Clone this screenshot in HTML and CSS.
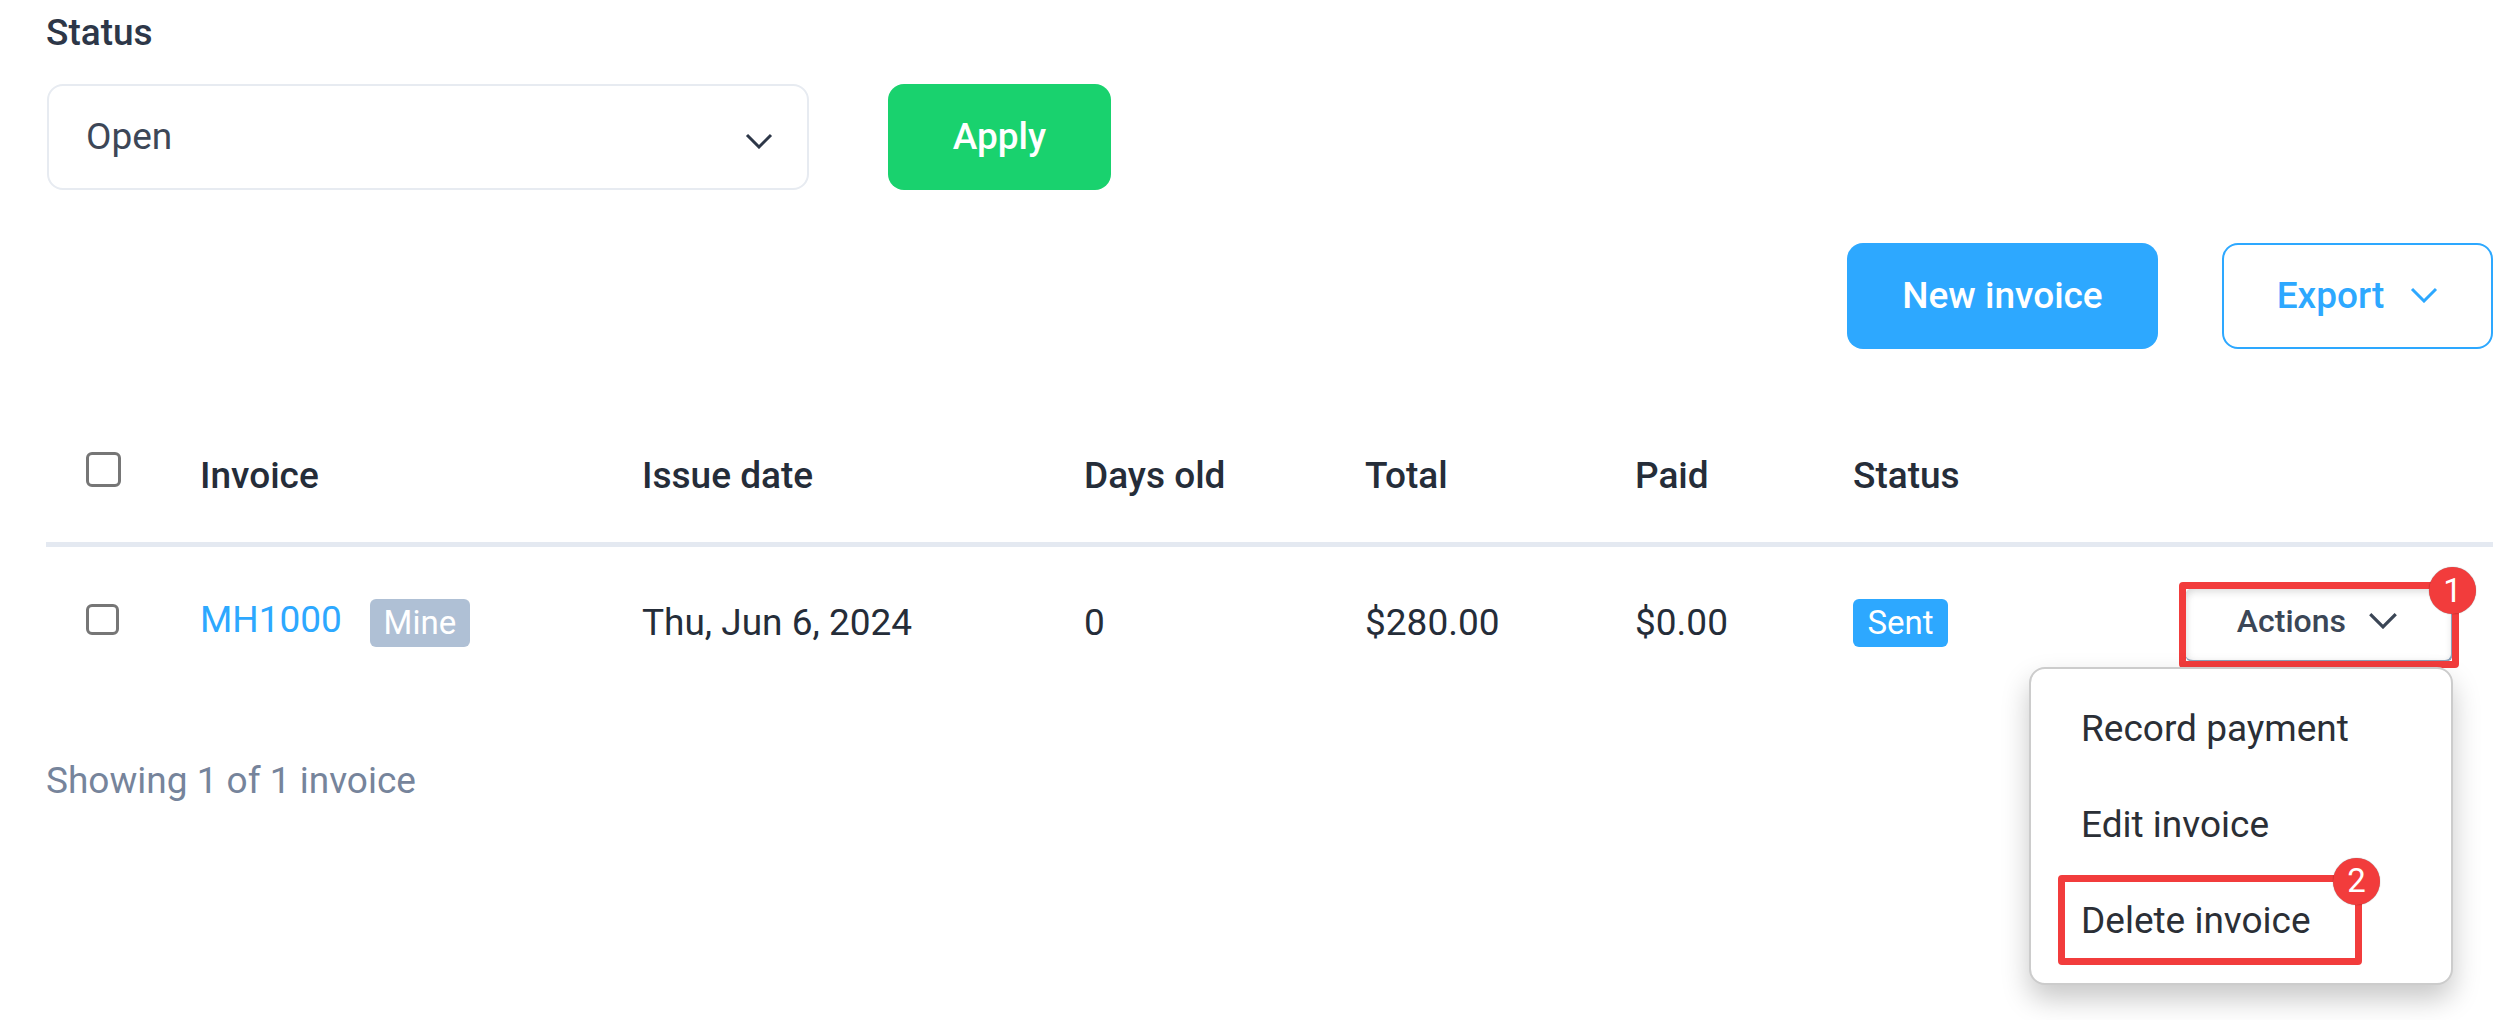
FILE: index.html
```html
<!DOCTYPE html>
<html lang="en">
<head>
<meta charset="utf-8">
<title>Invoices</title>
<link rel="stylesheet" href="styles.css">
</head>
<body>
<main class="page">
  <form class="filter">
    <label class="filter-label">Status</label>
    <div class="filter-row">
      <div class="select">
        <span>Open</span>
        <svg class="select-chevron" viewBox="0 0 28 16"><path d="M2 2 L14 14 L26 2"/></svg>
      </div>
      <button type="button" class="btn btn-apply">Apply</button>
    </div>
  </form>
  <div class="toolbar">
    <button type="button" class="btn btn-new">New invoice</button>
    <button type="button" class="btn btn-export">Export
      <svg class="export-chevron" viewBox="0 0 28 16"><path d="M2 2 L14 14 L26 2"/></svg>
    </button>
  </div>
  <table class="invoices">
    <colgroup>
      <col class="c-check"><col class="c-invoice"><col class="c-date"><col class="c-days"><col class="c-total"><col class="c-paid"><col class="c-status"><col>
    </colgroup>
    <thead>
      <tr>
        <th class="check-cell"><span class="checkbox checkbox-head"></span></th>
        <th>Invoice</th>
        <th>Issue date</th>
        <th>Days old</th>
        <th>Total</th>
        <th>Paid</th>
        <th>Status</th>
        <th></th>
      </tr>
    </thead>
    <tbody>
      <tr>
        <td class="check-cell"><span class="checkbox"></span></td>
        <td><a class="invoice-link">MH1000</a><span class="tag tag-mine">Mine</span></td>
        <td>Thu, Jun 6, 2024</td>
        <td>0</td>
        <td>$280.00</td>
        <td>$0.00</td>
        <td><span class="tag tag-sent">Sent</span></td>
        <td class="actions-cell">
          <div class="actions">
            <div class="actions-btn">Actions
              <svg class="actions-chevron" viewBox="0 0 28 16"><path d="M2 2 L14 14 L26 2"/></svg>
            </div>
            <div class="mark mark-actions"><span class="mark-num">1</span></div>
            <ul class="menu">
              <li>Record payment</li>
              <li>Edit invoice</li>
              <li>Delete invoice<div class="mark mark-delete"><span class="mark-num">2</span></div></li>
            </ul>
          </div>
        </td>
      </tr>
    </tbody>
  </table>
  <p class="count">Showing 1 of 1 invoice</p>
</main>
</body>
</html>
```
FILE: styles.css
```css
* { box-sizing: border-box; }
html, body { margin: 0; padding: 0; background: #fff; }
body {
  height: 1020px;
  overflow: hidden;
  font-family: Roboto, "Liberation Sans", sans-serif;
  font-size: 37px;
  color: #2d3748;
}
.page { padding: 13px 23px 0 46px; }
.filter-label { display: block; font-size: 37px; font-weight: 500; line-height: 40px; height: 71px; }
.filter-row { display: flex; gap: 79px; align-items: flex-start; padding-left: 1px; }
.select {
  width: 762px; height: 106px;
  border: 2px solid #e7ebf1; border-radius: 16px;
  display: flex; align-items: center; justify-content: space-between;
  padding: 0 34px 2px 37px;
  color: #3d4757;
}
.select-chevron { width: 28px; height: 16px; margin-top: 10px; }
.select-chevron path, .export-chevron path, .actions-chevron path { fill: none; stroke: #2d3748; stroke-width: 3; }
.btn {
  font-family: inherit; font-size: 37px; font-weight: 500;
  height: 106px; border-radius: 16px; border: 0; padding: 0 0 2px;
  display: flex; align-items: center; justify-content: center;
}
.btn-apply { width: 223px; background: #19d26e; color: #fff; }
.toolbar { display: flex; justify-content: flex-end; gap: 64px; margin-top: 53px; }
.btn-new { width: 311px; background: #2da8ff; color: #fff; }
.btn-export { width: 271px; background: #fff; border: 2px solid #2da8ff; color: #2da8ff; gap: 26px; }
.export-chevron { width: 28px; height: 16px; }
.export-chevron path { stroke: #2da8ff; }
.invoices { width: 100%; border-collapse: collapse; table-layout: fixed; margin-top: 85px; }
.c-check { width: 154px; }
.c-invoice { width: 442px; }
.c-date { width: 442px; }
.c-days { width: 281px; }
.c-total { width: 270px; }
.c-paid { width: 218px; }
.c-status { width: 260px; }
.invoices th { text-align: left; font-weight: 500; font-size: 37px; height: 110px; padding: 0 0 25px; border-bottom: 5px solid #e4e9f1; vertical-align: middle; color: #252d39; }
.invoices td { height: 154px; padding: 0; vertical-align: middle; color: #252d39; }
.invoices .check-cell { padding-left: 40px; }
.checkbox { display: block; width: 33px; height: 31px; margin-top: -5px; border: 3px solid #767676; border-radius: 6px; background: #fff; }
.checkbox-head { height: 35px; margin-top: -12px; width: 35px; }
.invoice-link { color: #2da8ff; }
.tag { display: inline-block; height: 48px; line-height: 48px; border-radius: 6px; color: #fff; text-align: center; font-size: 33px; vertical-align: middle; position: relative; top: 1px; }
.tag-mine { width: 100px; background: #afc0d5; margin-left: 28px; }
.tag-sent { width: 95px; background: #2da8ff; }
.actions-cell { position: relative; }
.actions { position: absolute; left: 0; right: 0; top: 35px; height: 0; }
.actions-btn {
  position: absolute; right: 40px; top: 6px; width: 268px; height: 74px;
  border-bottom: 2px solid #8aa0b8; border-right: 2px solid #8aa0b8; border-radius: 8px;
  box-shadow: inset 0 5px 7px rgba(0,0,0,.1), inset 4px 0 6px rgba(0,0,0,.05);
  display: flex; align-items: center; justify-content: flex-end; gap: 22px;
  padding: 0 53px 6px 0; font-size: 32px; font-weight: 500; color: #3b4656;
}
.actions-chevron { width: 30px; height: 17px; }
.actions-chevron path { stroke: #3b4656; }
.mark { position: absolute; border: 7px solid #f23c3c; border-radius: 4px; pointer-events: none; }
.mark-actions { right: 34px; top: 0; width: 280px; height: 86px; }
.mark-delete { left: 27px; top: 2px; width: 304px; height: 90px; }
.mark-num {
  position: absolute; right: -24px; top: -22px;
  width: 47px; height: 47px; border-radius: 50%; background: #f23c3c; color: #fff;
  display: flex; align-items: center; justify-content: center;
  font-size: 33px; box-shadow: 0 0 1px rgba(0,0,0,.5);
}
.mark-delete .mark-num { right: -25px; top: -24px; }
.menu {
  position: absolute; right: 40px; top: 85px; width: 424px; height: 318px;
  margin: 0; padding: 12px 0 0; list-style: none; background: #fff;
  border: 2px solid #ccc; border-radius: 16px;
  box-shadow: 0 14px 28px rgba(0,0,0,.22);
  color: #2b2f36;
}
.menu li { position: relative; height: 96px; line-height: 96px; padding-left: 50px; }
.count { margin: 62px 0 0; color: #76849b; line-height: 42px; }
```
